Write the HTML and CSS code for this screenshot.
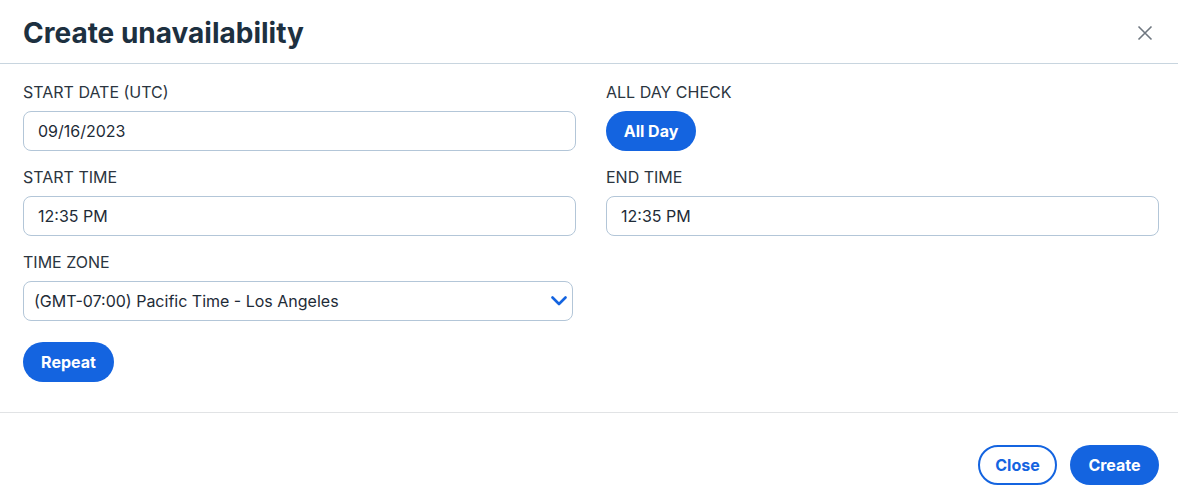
FILE: index.html
```html
<!DOCTYPE html>
<html>
<head>
<meta charset="utf-8">
<link rel="stylesheet" href="styles.css">
</head>
<body>
<div class="modal">
  <header class="modal-header">
    <h1 class="title">Create unavailability</h1>
    <button class="close-x" aria-label="Close">
      <svg width="16" height="16" viewBox="0 0 16 16"><path d="M1.5 1.5 L14.5 14.5 M14.5 1.5 L1.5 14.5" stroke="#6f7780" stroke-width="1.6" fill="none"/></svg>
    </button>
  </header>
  <main class="modal-body">
    <div class="grid">
      <div class="field">
        <label class="label">START DATE (UTC)</label>
        <div class="input">09/16/2023</div>
      </div>
      <div class="field">
        <label class="label">ALL DAY CHECK</label>
        <div><button class="btn btn-primary btn-allday">All Day</button></div>
      </div>
      <div class="field">
        <label class="label">START TIME</label>
        <div class="input">12:35 PM</div>
      </div>
      <div class="field">
        <label class="label">END TIME</label>
        <div class="input">12:35 PM</div>
      </div>
      <div class="field">
        <label class="label">TIME ZONE</label>
        <div class="input select">
          <span>(GMT-07:00) Pacific Time - Los Angeles</span>
          <svg width="16" height="10" viewBox="0 0 16 10"><path d="M1.5 1.5 L8 8 L14.5 1.5" stroke="#1464e0" stroke-width="2.6" fill="none" stroke-linecap="round" stroke-linejoin="round"/></svg>
        </div>
      </div>
    </div>
    <div class="repeat-row"><button class="btn btn-primary btn-repeat">Repeat</button></div>
  </main>
  <footer class="modal-footer">
    <button class="btn btn-outline btn-close">Close</button>
    <button class="btn btn-primary btn-create">Create</button>
  </footer>
</div>
</body>
</html>
```

FILE: styles.css
```css
* { box-sizing: border-box; }
html, body { margin: 0; padding: 0; background: #fff; }
body {
  font-family: Inter, "Noto Sans", sans-serif;
  color: #253241;
  width: 1178px;
  height: 503px;
  overflow: hidden;
}
.modal { display: flex; flex-direction: column; }
.modal-header {
  height: 64px;
  display: flex;
  align-items: center;
  justify-content: space-between;
  padding: 0 25px 0 23px;
  border-bottom: 1px solid #c8d5df;
}
.title {
  margin: 0;
  font-size: 28px;
  font-weight: 700;
  color: #1d3040;
  letter-spacing: 0;
  padding-top: 2px;
}
.close-x {
  border: none;
  background: none;
  padding: 0;
  width: 16px;
  height: 16px;
  display: flex;
  cursor: pointer;
  margin-top: 2px;
}
.modal-body {
  padding: 18px 19px 30px 23px;
  border-bottom: 1px solid #e1e3e5;
}
.grid {
  display: grid;
  grid-template-columns: 553px 553px;
  column-gap: 30px;
  row-gap: 16px;
}
.field { display: flex; flex-direction: column; }
.label {
  font-size: 16px;
  line-height: 20px;
  color: #2b3540;
  margin-bottom: 9px;
}
.input {
  height: 40px;
  border: 1px solid #b3c6d8;
  border-radius: 8px;
  padding: 0 14px;
  display: flex;
  align-items: center;
  font-size: 16px;
  color: #1e2b37;
}
.select {
  width: 550px;
  justify-content: space-between;
  padding: 0 5px 0 10px;
}
.btn {
  font-family: Inter, "Noto Sans", sans-serif;
  font-weight: 700;
  font-size: 16px;
  height: 40px;
  border-radius: 20px;
  cursor: pointer;
  padding: 0;
}
.btn-primary {
  background: #1464e0;
  border: none;
  color: #fff;
}
.btn-outline {
  background: #fff;
  border: 2px solid #1464e0;
  color: #1464e0;
}
.btn-allday { width: 90px; }
.repeat-row { margin-top: 21px; }
.btn-repeat { width: 91px; }
.modal-footer {
  display: flex;
  justify-content: flex-end;
  gap: 13px;
  padding: 32px 19px 0 0;
}
.btn-close { width: 79px; }
.btn-create { width: 89px; }
```
